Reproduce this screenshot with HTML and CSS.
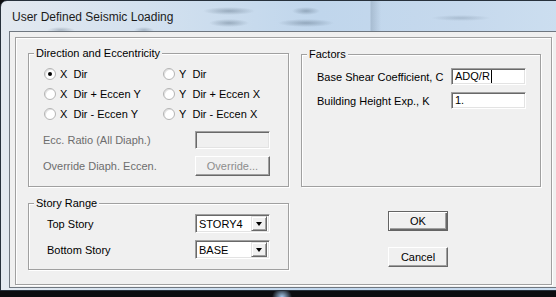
FILE: index.html
```html
<!DOCTYPE html>
<html lang="en">
<head>
    <meta charset="UTF-8">
    <title>User Defined Seismic Loading</title>
    <link rel="stylesheet" href="styles.css">
</head>
<body>
    <div class="window">
        <div class="titlebar">
            <span class="title">User Defined Seismic Loading</span>
        </div>
        <div class="client">
            <div class="frame">
                <fieldset class="group dir">
                    <legend>Direction and Eccentricity</legend>
                    <div class="radios">
                        <label class="radio"><span class="circle on"></span>X&nbsp; Dir</label>
                        <label class="radio"><span class="circle"></span>Y&nbsp; Dir</label>
                        <label class="radio"><span class="circle"></span>X&nbsp; Dir + Eccen Y</label>
                        <label class="radio"><span class="circle"></span>Y&nbsp; Dir + Eccen X</label>
                        <label class="radio"><span class="circle"></span>X&nbsp; Dir - Eccen Y</label>
                        <label class="radio"><span class="circle"></span>Y&nbsp; Dir - Eccen X</label>
                    </div>
                    <div class="row off">
                        <span>Ecc. Ratio (All Diaph.)</span>
                        <span class="edit dim"></span>
                    </div>
                    <div class="row off">
                        <span>Override Diaph. Eccen.</span>
                        <button class="btn wide" disabled>Override...</button>
                    </div>
                </fieldset>

                <fieldset class="group factors">
                    <legend>Factors</legend>
                    <div class="frow">
                        <span>Base Shear Coefficient, C</span>
                        <span class="edit">ADQ/R<span class="caret"></span></span>
                    </div>
                    <div class="frow">
                        <span>Building Height Exp., K</span>
                        <span class="edit">1.</span>
                    </div>
                </fieldset>

                <fieldset class="group story">
                    <legend>Story Range</legend>
                    <div class="srow">
                        <span>Top Story</span>
                        <div class="combo"><span>STORY4</span><span class="drop"></span></div>
                    </div>
                    <div class="srow">
                        <span>Bottom Story</span>
                        <div class="combo"><span>BASE</span><span class="drop"></span></div>
                    </div>
                </fieldset>

                <div class="actions">
                    <button class="btn default">OK</button>
                    <button class="btn">Cancel</button>
                </div>
            </div>
        </div>
    </div>
</body>
</html>
```

FILE: styles.css
```css
body {
    margin: 0;
    width: 556px;
    height: 297px;
    overflow: hidden;
    background:
        radial-gradient(ellipse 10px 9px at 282px 297px, #a6cbee, rgba(0,0,0,0)),
        #0c0d10;
    font-family: "Liberation Sans", Arial, sans-serif;
    font-size: 11px;
    color: #000;
}

.window {
    width: 580px;
    height: 291px;
    box-sizing: border-box;
    border: 1px solid #27313c;
    border-radius: 7px 7px 0 0;
    padding: 0 0 2px 8px;
    display: flex;
    flex-direction: column;
    background: linear-gradient(to right, #e3e9f0 0%, #d3e1ef 25%, #c0d6ec 55%, #c6d9ed 80%, #cddff0 100%);
}

/* title bar with the blurry glass behind it */
.titlebar {
    height: 30px;
    display: flex;
    align-items: center;
    margin-left: -8px;
    padding-left: 11px;
    background:
        radial-gradient(ellipse 26px 4px at 228px 10px, rgba(60,80,100,.35), rgba(0,0,0,0)),
        radial-gradient(ellipse 20px 4px at 228px 22px, rgba(60,80,100,.35), rgba(0,0,0,0)),
        radial-gradient(ellipse 14px 4px at 305px 10px, rgba(60,80,100,.35), rgba(0,0,0,0)),
        radial-gradient(ellipse 28px 4px at 305px 22px, rgba(60,80,100,.35), rgba(0,0,0,0)),
        radial-gradient(ellipse 14px 3px at 60px 29px, rgba(60,80,100,.3), rgba(0,0,0,0)),
        radial-gradient(ellipse 10px 3px at 143px 29px, rgba(60,80,100,.3), rgba(0,0,0,0)),
        radial-gradient(ellipse 30px 3px at 460px 17px, rgba(80,100,120,.25), rgba(0,0,0,0)),
        linear-gradient(to right, rgba(0,0,0,0) 369px, rgba(90,110,130,.25) 370px, rgba(0,0,0,0) 380px);
}

.title {
    font-size: 12px;
    color: #1b1b1b;
    padding-top: 2px;
}

.client {
    flex: 1;
    border: 1px solid #6f7780;
    background: #f0f0f0;
    padding: 5px 0 2px 5px;
    display: flex;
}

.frame {
    flex: 0 0 537px;
    box-sizing: border-box;
    border: 1px solid #a0a0a0;
    box-shadow: inset 1px 1px 0 #fff, 1px 1px 0 #fff;
    padding: 9px 0 0 12px;
    display: grid;
    grid-template-columns: 261px 240px;
    grid-template-rows: auto auto;
    column-gap: 12px;
    row-gap: 10px;
    align-content: start;
}

.group {
    margin: 0;
    padding: 0 0 10px 0;
    min-width: 0;
    border: 1px solid #a0a0a0;
    box-shadow: inset 1px 1px 0 #fff, 1px 1px 0 #fff;
}

.group legend {
    padding: 0 2px;
    margin-left: 5px;
    line-height: 13px;
    background: #f0f0f0;
}

.radios {
    margin: 4px 0 0 14px;
    display: grid;
    grid-template-columns: 119px 1fr;
    grid-auto-rows: 20px;
}

.radio {
    display: flex;
    align-items: center;
    gap: 4px;
    padding-left: 1px;
}

.circle {
    width: 10px;
    height: 10px;
    border-radius: 50%;
    border: 1px solid #b4b4b4;
    background: #fff;
    box-shadow: inset 1px 1px 0 #e2e2e2;
    display: flex;
    align-items: center;
    justify-content: center;
}

.circle.on::after {
    content: "";
    width: 4px;
    height: 4px;
    border-radius: 50%;
    background: #000;
}

.row {
    display: grid;
    grid-template-columns: 152px 75px;
    align-items: center;
    margin: 7px 0 0 14px;
}

.row.off {
    color: #6d6d6d;
}

.edit {
    height: 17px;
    box-sizing: border-box;
    border-top: 1px solid #a0a0a0;
    border-left: 1px solid #a0a0a0;
    border-right: 1px solid #fff;
    border-bottom: 1px solid #fff;
    box-shadow: inset 1px 1px 0 #696969, inset -1px -1px 0 #e3e3e3;
    background: #fff;
    padding-left: 3px;
    line-height: 15px;
    display: flex;
    align-items: center;
}

.edit.dim {
    background: #f0f0f0;
    height: 18px;
}

.caret {
    width: 1px;
    height: 13px;
    background: #000;
    margin-left: 1px;
}

.btn {
    height: 20px;
    padding: 0;
    font: inherit;
    color: #000;
    background: #f0f0f0;
    border-top: 1px solid #fff;
    border-left: 1px solid #fff;
    border-right: 1px solid #696969;
    border-bottom: 1px solid #696969;
    box-shadow: inset -1px -1px 0 #a0a0a0;
}

.btn.wide {
    width: 75px;
    color: #8d8d8d;
}

.btn.default {
    border: 1px solid #646464;
    box-shadow: inset 1px 1px 0 #fff, inset -1px -1px 0 #696969, inset -2px -2px 0 #a0a0a0;
}

.factors {
    margin-top: 1px;
}

.frow {
    display: grid;
    grid-template-columns: 134px 75px;
    align-items: center;
    margin: 7px 0 0 15px;
}

.srow {
    display: grid;
    grid-template-columns: 148px 75px;
    align-items: center;
    margin: 4px 0 0 18px;
}

.srow + .srow {
    margin-top: 7px;
}

.combo {
    height: 19px;
    box-sizing: border-box;
    border-top: 1px solid #a0a0a0;
    border-left: 1px solid #a0a0a0;
    border-right: 1px solid #fff;
    border-bottom: 1px solid #fff;
    box-shadow: inset 1px 1px 0 #696969, inset -1px -1px 0 #e3e3e3;
    background: #fff;
    display: flex;
    align-items: center;
    justify-content: space-between;
    padding: 2px 2px 2px 3px;
}

.drop {
    width: 16px;
    height: 15px;
    box-sizing: border-box;
    background: #f0f0f0;
    border-top: 1px solid #e3e3e3;
    border-left: 1px solid #e3e3e3;
    border-right: 1px solid #696969;
    border-bottom: 1px solid #696969;
    box-shadow: inset 1px 1px 0 #fff, inset -1px -1px 0 #a0a0a0;
    display: flex;
    align-items: center;
    justify-content: center;
}

.drop::after {
    content: "";
    border-left: 3.5px solid transparent;
    border-right: 3.5px solid transparent;
    border-top: 4px solid #000;
}

.actions {
    display: flex;
    flex-direction: column;
    gap: 16px;
    padding: 14px 0 0 87px;
}

.actions .btn {
    width: 60px;
}
```
